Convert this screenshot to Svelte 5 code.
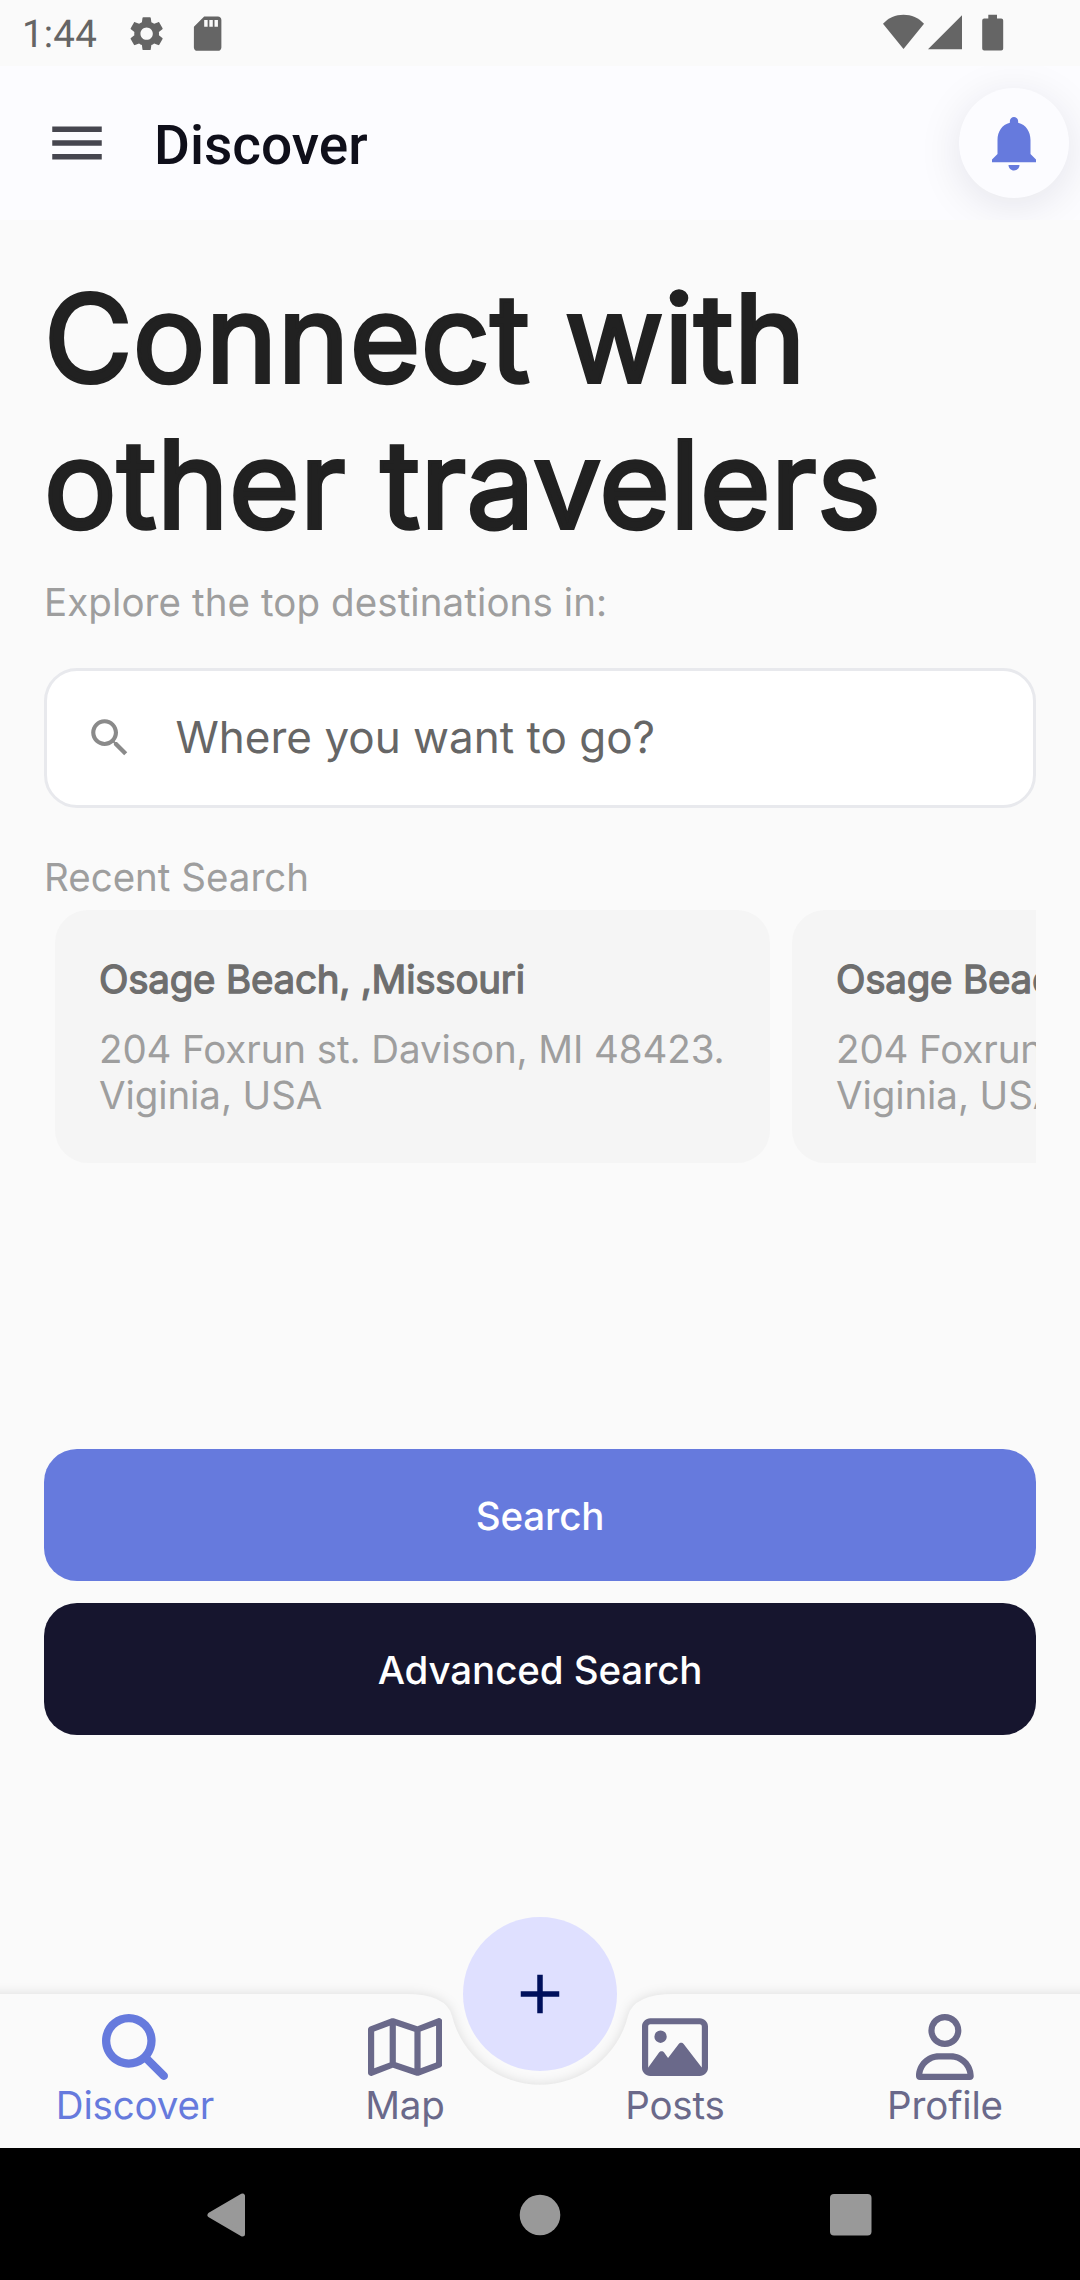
<script>
  const places = [
    { title: 'Osage Beach, ,Missouri', lines: ['204 Foxrun st. Davison, MI 48423.', 'Viginia, USA'] },
    { title: 'Osage Beach, ,Missouri', lines: ['204 Foxrun st. Davison, MI 48423.', 'Viginia, USA'] }
  ];

  const tabs = [
    {
      label: 'Discover',
      width: 512,
      active: true,
      path: 'M416 208c0 45.9-14.9 88.3-40 122.7L502.6 457.4c12.5 12.5 12.5 32.8 0 45.3s-32.8 12.5-45.3 0L330.7 376c-34.4 25.2-76.8 40-122.7 40C93.1 416 0 322.9 0 208S93.1 0 208 0S416 93.1 416 208zM208 352a144 144 0 1 0 0-288 144 144 0 1 0 0 288z'
    },
    {
      label: 'Map',
      width: 576,
      active: false,
      path: 'M565.6 36.2C572.1 40.7 576 48.1 576 56V392c0 10-6.2 18.9-15.5 22.4l-168 64c-5.2 2-10.9 2.1-16.1 .3L192.5 417.5l-160 61c-7.4 2.8-15.7 1.8-22.2-2.7S0 463.9 0 456V120c0-10 6.1-18.9 15.5-22.4l168-64c5.2-2 10.9-2.1 16.1-.3L383.5 94.5l160-61c7.4-2.8 15.7-1.8 22.2 2.7zM48 136.5V421.2l120-45.7V90.8L48 136.5zM360 422.7V137.3L216 89.3V374.7l144 48zm48-1.5l120-45.7V90.8L408 136.5V421.2z'
    },
    {
      label: 'Posts',
      width: 512,
      active: false,
      path: 'M448 80c8.8 0 16 7.2 16 16V415.8l-5-6.5-136-176c-4.5-5.9-11.6-9.3-19-9.3s-14.4 3.4-19 9.3L202 340.7l-30.5-42.7C167 291.7 159.8 288 152 288s-15 3.7-19.5 10.1l-80 112L48 416.3l0-.3V96c0-8.8 7.2-16 16-16H448zM64 32C28.7 32 0 60.7 0 96V416c0 35.3 28.7 64 64 64H448c35.3 0 64-28.7 64-64V96c0-35.3-28.7-64-64-64H64zm80 192a48 48 0 1 0 0-96 48 48 0 1 0 0 96z'
    },
    {
      label: 'Profile',
      width: 448,
      active: false,
      path: 'M304 128a80 80 0 1 0-160 0 80 80 0 1 0 160 0zM96 128a128 128 0 1 1 256 0A128 128 0 1 1 96 128zM49.3 464H398.7c-8.9-63.3-63.3-112-129-112H178.3c-65.7 0-120.1 48.7-129 112zM0 482.3C0 383.8 79.8 304 178.3 304h91.4C368.2 304 448 383.8 448 482.3c0 16.4-13.3 29.7-29.7 29.7H29.7C13.3 512 0 498.7 0 482.3z'
    }
  ];
</script>

<div class="screen">
  <header class="status">
    <span class="clock">1:44</span>
    <svg class="gear" viewBox="0 0 24 24"><path d="M19.14 12.94c.04-.3.06-.61.06-.94 0-.32-.02-.64-.07-.94l2.03-1.58c.18-.14.23-.41.12-.61l-1.92-3.32c-.12-.22-.37-.29-.59-.22l-2.39.96c-.5-.38-1.03-.7-1.62-.94l-.36-2.54c-.04-.24-.24-.41-.48-.41h-3.84c-.24 0-.43.17-.47.41l-.36 2.54c-.59.24-1.13.57-1.62.94l-2.39-.96c-.22-.08-.47 0-.59.22L2.74 8.87c-.12.21-.08.47.12.61l2.03 1.58c-.05.3-.09.63-.09.94s.02.64.07.94l-2.03 1.58c-.18.14-.23.41-.12.61l1.92 3.32c.12.22.37.29.59.22l2.39-.96c.5.38 1.03.7 1.62.94l.36 2.54c.05.24.24.41.48.41h3.84c.24 0 .44-.17.47-.41l.36-2.54c.59-.24 1.13-.56 1.62-.94l2.39.96c.22.08.47 0 .59-.22l1.92-3.32c.12-.22.07-.47-.12-.61l-2.01-1.58zM12 15.6c-1.98 0-3.6-1.62-3.6-3.6s1.62-3.6 3.6-3.6 3.6 1.62 3.6 3.6-1.62 3.6-3.6 3.6z" /></svg>
    <svg class="card-icon" viewBox="0 0 24 24"><path d="M18 2h-8L4.02 8 4 20c0 1.1.9 2 2 2h12c1.1 0 2-.9 2-2V4c0-1.1-.9-2-2-2zm-6 6h-2V4h2v4zm3 0h-2V4h2v4zm3 0h-2V4h2v4z" /></svg>
    <svg class="signals" viewBox="0 0 121 38" width="121" height="38">
      <path d="M0 9.7C5.5 4 12.5 .8 20.5 .8S35.500 4 41 9.700L20.500 35z" />
      <path d="M45 35.300L79 1.300V35.300z" />
      <path d="M105.300 .8h8.700v3.700h4.200a2 2 0 0 1 2 2V34.500a2 2 0 0 1-2 2h-17a2 2 0 0 1-2-2V6.500a2 2 0 0 1 2-2h4.100z" />
    </svg>
  </header>

  <div class="appbar">
    <svg class="menu" viewBox="0 0 24 24"><path d="M3 18h18v-2H3v2zm0-5h18v-2H3v2zm0-7v2h18V6H3z" /></svg>
    <div class="title">Discover</div>
    <div class="bell">
      <svg viewBox="0 0 24 24"><path d="M12 22c1.1 0 2-.9 2-2h-4c0 1.100.89 2 2 2zm6-6v-5c0-3.070-1.640-5.640-4.500-6.320V4c0-.83-.67-1.500-1.500-1.500s-1.500.67-1.500 1.500v.68C7.630 5.360 6 7.920 6 11v5l-2 2v1h16v-1l-2-2z" /></svg>
    </div>
  </div>

  <main>
    <h1>Connect with<br />other travelers</h1>
    <p class="caption">Explore the top destinations in:</p>

    <div class="field">
      <svg viewBox="0 0 24 24"><path d="M15.500 14h-.79l-.28-.27C15.410 12.590 16 11.110 16 9.500 16 5.910 13.090 3 9.500 3S3 5.910 3 9.500 5.910 16 9.500 16c1.610 0 3.090-.59 4.230-1.570l.27.28v.79l5 4.990L20.490 19l-4.990-5zm-6 0C7.010 14 5 11.990 5 9.500S7.010 5 9.500 5 14 7.010 14 9.500 11.990 14 9.500 14z" /></svg>
      <span>Where you want to go?</span>
    </div>

    <p class="caption recent-label">Recent Search</p>
    <div class="recent">
      {#each places as place}
        <article>
          <h2>{place.title}</h2>
          {#each place.lines as line}<p>{line}</p>{/each}
        </article>
      {/each}
    </div>

    <div class="actions">
      <button class="primary">Search</button>
      <button class="dark">Advanced Search</button>
    </div>
  </main>

  <nav class="tabs">
    <svg class="bar" viewBox="0 0 1080 154" width="1080" height="154">
      <path d="M-40 0H405.250Q446.500 0 451.920 21.850A90.750 90.750 0 0 0 628.080 21.850Q633.500 0 674.750 0H1120V200H-40z" />
    </svg>
    {#each tabs as tab}
      <div class="tab" class:active={tab.active}>
        <svg viewBox="0 0 {tab.width} 512" height="66"><path d={tab.path} /></svg>
        <span>{tab.label}</span>
      </div>
    {/each}
    <div class="fab">
      <svg viewBox="0 0 24 24"><path d="M19 13h-6v6h-2v-6H5v-2h6V5h2v6h6v2z" /></svg>
    </div>
  </nav>

  <footer class="system">
    <svg viewBox="0 0 40 46" width="40" height="46"><path d="M4 23L36.500 4V42z" stroke="#999" stroke-width="5" stroke-linejoin="round" /></svg>
    <svg class="home" viewBox="0 0 42 42" width="42" height="42"><circle cx="21" cy="21" r="20.300" /></svg>
    <svg viewBox="0 0 42 42" width="42" height="42"><rect width="41.500" height="41.500" rx="4" /></svg>
  </footer>
</div>

<style>
  :global(body) {
    margin: 0;
    background: #fafafa;
  }

  .screen {
    width: 1080px;
    height: 2280px;
    display: flex;
    flex-direction: column;
    overflow: hidden;
    background: #fafafa;
    font-family: Inter, 'Liberation Sans', sans-serif;
    font-size: 38.5px;
    line-height: 46px;
    text-rendering: geometricPrecision;
  }

  svg {
    display: block;
    flex: none;
  }

  h1,
  h2,
  p {
    margin: 0;
    font-weight: 400;
  }

  .status {
    height: 66px;
    flex: none;
    display: flex;
    align-items: flex-start;
    box-sizing: border-box;
    padding: 13px 76px 0 22px;
    fill: #656565;
    color: #656565;
  }

  .clock {
    width: 104px;
    font-family: Roboto, sans-serif;
    font-size: 38.5px;
    line-height: 43px;
    letter-spacing: 0.2px;
  }

  .gear,
  .card-icon {
    width: 41.25px;
    height: 41.25px;
  }

  .card-icon {
    margin-left: 20px;
  }

  .signals {
    margin: 1px 0 0 auto;
  }

  .appbar {
    height: 154px;
    flex: none;
    display: flex;
    align-items: center;
    box-sizing: border-box;
    padding: 0 11px 0 44px;
    overflow: hidden;
    background: #fcfcff;
  }

  .menu {
    width: 66px;
    height: 66px;
    fill: #46464f;
  }

  .title {
    flex: 1;
    margin-left: 44px;
    padding-top: 5px;
    font-family: Roboto, sans-serif;
    font-size: 55px;
    font-weight: 500;
    line-height: 66px;
    color: #0f0f1a;
  }

  .bell {
    width: 110px;
    height: 110px;
    display: grid;
    place-items: center;
    border-radius: 50%;
    background: #fcfcff;
    box-shadow: 0 8px 44px rgba(22, 21, 46, 0.1);
    fill: #667add;
  }

  .bell svg,
  .fab svg {
    width: 66px;
    height: 66px;
  }

  main {
    height: 1774px;
    flex: none;
    display: flex;
    flex-direction: column;
    box-sizing: border-box;
    padding: 46px 44px 0;
  }

  h1 {
    margin-bottom: 22px;
    font-size: 121px;
    line-height: 146px;
    letter-spacing: 0.45px;
    color: #212121;
    -webkit-text-stroke: 3.8px #212121;
  }

  .caption {
    letter-spacing: 0.09px;
    color: #9e9e9e;
  }

  .recent-label {
    letter-spacing: 0;
  }

  .field {
    height: 140px;
    display: flex;
    align-items: center;
    box-sizing: border-box;
    margin: 42px 0 47px;
    padding-left: 38px;
    border: 3px solid #e8e9ed;
    border-radius: 33px;
    background: #fff;
    font-size: 44px;
    color: #666;
  }

  .field svg {
    width: 49.5px;
    height: 49.5px;
    fill: #8a8a8a;
  }

  .field span {
    margin-left: 41px;
    padding-bottom: 3px;
  }

  .recent {
    display: flex;
    gap: 22px;
    margin-top: 9px;
    padding-left: 11px;
    overflow: hidden;
  }

  article {
    width: 715px;
    height: 253px;
    flex: none;
    box-sizing: border-box;
    padding: 47px 44px 0;
    border-radius: 33px;
    background: #f5f5f5;
    color: #9e9e9e;
    white-space: nowrap;
  }

  article p {
    letter-spacing: -0.09px;
  }

  h2 {
    margin-bottom: 24px;
    font-size: 38.5px;
    line-height: 46px;
    letter-spacing: -0.22px;
    color: #6e6e6e;
    -webkit-text-stroke: 1.3px #6e6e6e;
  }

  .actions {
    display: grid;
    gap: 22px;
    margin-top: 286px;
  }

  button {
    height: 132px;
    padding: 4px 0 0;
    border: 0;
    border-radius: 33px;
    font: 500 38.5px / 46px Inter, sans-serif;
    letter-spacing: -0.1px;
    text-rendering: inherit;
    color: #fff;
  }

  .primary {
    background: #667add;
  }

  .dark {
    background: #16152e;
  }

  .tabs {
    position: relative;
    height: 154px;
    flex: none;
    display: grid;
    grid-template-columns: repeat(4, 1fr);
  }

  .bar {
    position: absolute;
    inset: 0;
    overflow: visible;
    fill: #fafafa;
    filter: drop-shadow(0 0 6px rgba(0, 0, 0, 0.12));
  }

  .tab {
    position: relative;
    display: flex;
    flex-direction: column;
    align-items: center;
    padding-top: 20px;
    fill: #6a698a;
    color: #6a698a;
    letter-spacing: -0.15px;
  }

  .tab span {
    margin-top: 3px;
  }

  .tab.active {
    fill: #667add;
    color: #667add;
  }

  .fab {
    position: absolute;
    left: 463px;
    top: -77px;
    width: 154px;
    height: 154px;
    display: grid;
    place-items: center;
    border-radius: 50%;
    background: #dfe0ff;
    fill: #00105c;
  }

  /* Positioned so that its black covers the lower end of the tab bar's shape. */
  .system {
    position: relative;
    height: 132px;
    flex: none;
    display: flex;
    align-items: center;
    justify-content: space-between;
    box-sizing: border-box;
    padding: 1px 208px 0 206px;
    background: #000;
    fill: #999;
  }

  .home {
    margin-left: 4px;
  }
</style>
